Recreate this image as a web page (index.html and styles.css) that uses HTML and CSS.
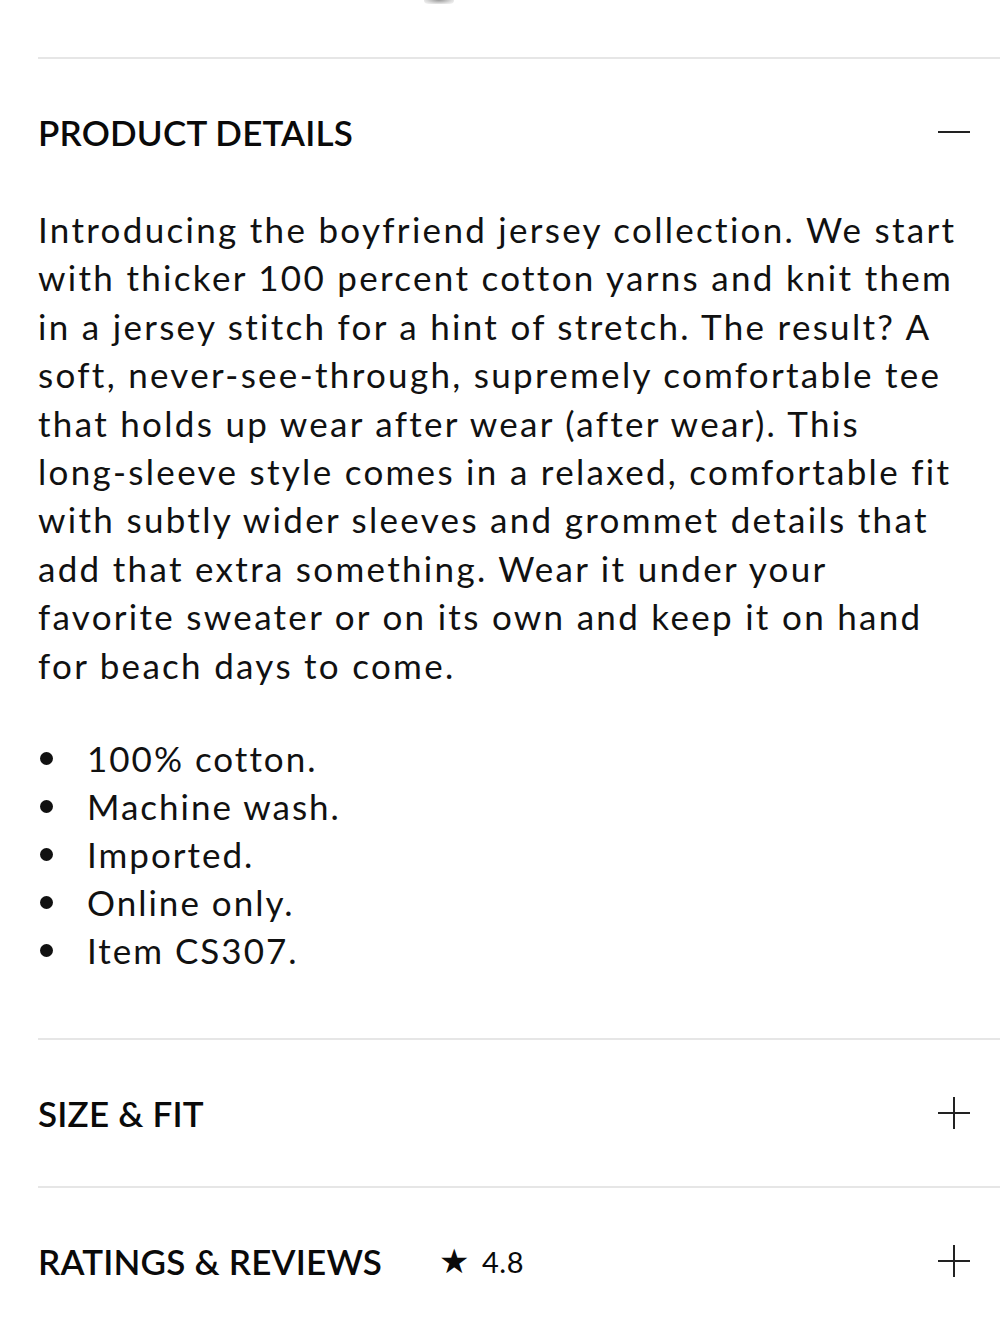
FILE: index.html
```html
<!DOCTYPE html>
<html lang="en">
<head>
    <meta charset="UTF-8">
    <meta name="viewport" content="width=device-width, initial-scale=1.0">
    <title>Product details</title>
    <link rel="stylesheet" href="styles.css">
</head>
<body>
    <div class="page">
        <!-- край кнопки карусели сверху -->
        <div class="peek"></div>

        <div class="panel open">
            <div class="panel-head">
                <h3>PRODUCT DETAILS</h3>
                <span class="toggle minus"></span>
            </div>
            <div class="panel-body">
                <p class="desc">Introducing the boyfriend jersey collection. We start with thicker 100 percent cotton yarns and knit them in a jersey stitch for a hint of stretch. The result? A soft, never-see-through, supremely comfortable tee that holds up wear after wear (after wear). This <span class="nb">long-sleeve</span> style comes in a relaxed, comfortable fit with subtly wider sleeves and grommet details that add that extra something. Wear it under your favorite sweater or on its own and keep it on hand for beach days to come.</p>
                <ul class="facts">
                    <li>100% cotton.</li>
                    <li>Machine wash.</li>
                    <li>Imported.</li>
                    <li>Online only.</li>
                    <li>Item CS307.</li>
                </ul>
            </div>
        </div>

        <div class="panel">
            <div class="panel-head">
                <h3>SIZE &amp; FIT</h3>
                <span class="toggle plus"></span>
            </div>
        </div>

        <div class="panel">
            <div class="panel-head">
                <h3>RATINGS &amp; REVIEWS <span class="rating"><span class="star">★</span> 4.8</span></h3>
                <span class="toggle plus"></span>
            </div>
        </div>
    </div>
</body>
</html>
```

FILE: styles.css
```css
body {
    margin: 0;
    padding: 0;
    background-color: #fff;
    color: #111;
    font-family: Lato, "Noto Sans", sans-serif;
}
.page {
    width: 1000px;
    overflow: hidden;
}
.peek {
    width: 30px;
    height: 4px;
    margin-left: 424px;
    margin-bottom: 53px;
    background: radial-gradient(ellipse at top, #999, #ddd 60%, #fff);
    border-radius: 0 0 15px 15px;
}
.panel {
    margin-left: 38px;
    padding-right: 30px;
    border-top: 2px solid #e6e6e6;
}
.panel-head {
    height: 146px;
    display: flex;
    align-items: center;
    justify-content: space-between;
}
.panel-head h3 {
    margin: 0;
    font-size: 35px;
    font-weight: 600;
    letter-spacing: 0.2px;
    color: #0a0a0a;
}
.rating {
    margin-left: 48px;
    font-weight: 400;
    font-size: 29px;
    letter-spacing: 0.5px;
    position: relative;
    top: -2px;
}
.star {
    font-family: "DejaVu Sans", sans-serif;
    font-size: 34px;
    margin-right: 4px;
}
.toggle {
    position: relative;
    width: 32px;
    height: 32px;
}
.toggle::before,
.toggle::after {
    content: "";
    position: absolute;
    background-color: #222;
}
.toggle::before {
    left: 0;
    right: 0;
    top: 15px;
    height: 2px;
}
.plus::after {
    top: 0;
    bottom: 0;
    left: 15px;
    width: 2px;
}
.panel-body {
    padding-bottom: 64px;
}
.desc {
    margin: 0 0 45px;
    font-size: 35px;
    line-height: 48.4px;
    letter-spacing: 2.3px;
}
.nb {
    white-space: nowrap;
}
.facts {
    margin: 0;
    padding: 0;
    list-style: none;
    font-size: 35px;
    line-height: 48px;
    letter-spacing: 2px;
}
.facts li {
    position: relative;
    padding-left: 49px;
}
.facts li::before {
    content: "";
    position: absolute;
    left: 2px;
    top: 18px;
    width: 13px;
    height: 13px;
    border-radius: 50%;
    background-color: #111;
}
```
